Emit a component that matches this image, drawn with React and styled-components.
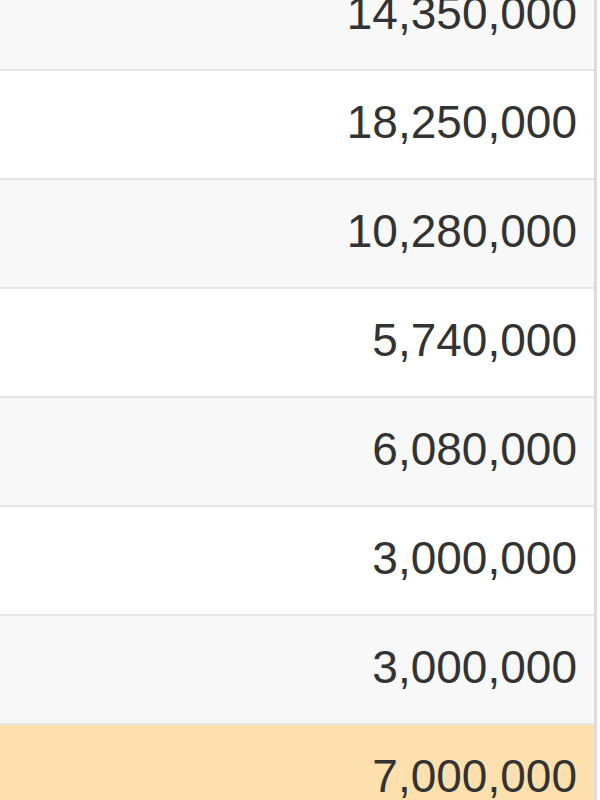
import React from 'react';
import styled, { createGlobalStyle } from 'styled-components';

const GlobalStyle = createGlobalStyle`
  html, body {
    margin: 0;
    padding: 0;
    background: #fff;
    overflow: hidden;
  }
`;

const amounts = [
  14350000,
  18250000,
  10280000,
  5740000,
  6080000,
  3000000,
  3000000,
  7000000,
];

const Frame = styled.div`
  width: 600px;
  height: 800px;
  overflow: hidden;
  background: #fff;
`;

const Table = styled.table`
  width: 597px;
  margin-top: -39px;
  border-collapse: collapse;
  border-right: 3px solid #dcdcdc;
  font-family: "Liberation Sans", Arial, sans-serif;
`;

const Row = styled.tr`
  background: ${(p) => (p.$highlight ? '#fde0ad' : p.$striped ? '#f8f8f8' : '#fff')};
  border-bottom: 2px solid #e6e6e6;
`;

const Cell = styled.td`
  height: 109px;
  padding: 0 17px 5px 0;
  text-align: right;
  font-size: 46px;
  color: #333;
  line-height: 1;
  box-sizing: border-box;
`;

const format = (n) => n.toLocaleString('en-US');

export default function App() {
  return (
    <Frame>
      <GlobalStyle />
      <Table>
        <tbody>
          {amounts.map((amount, i) => (
            <Row key={i} $striped={i % 2 === 0} $highlight={i === amounts.length - 1}>
              <Cell>{format(amount)}</Cell>
            </Row>
          ))}
        </tbody>
      </Table>
    </Frame>
  );
}
